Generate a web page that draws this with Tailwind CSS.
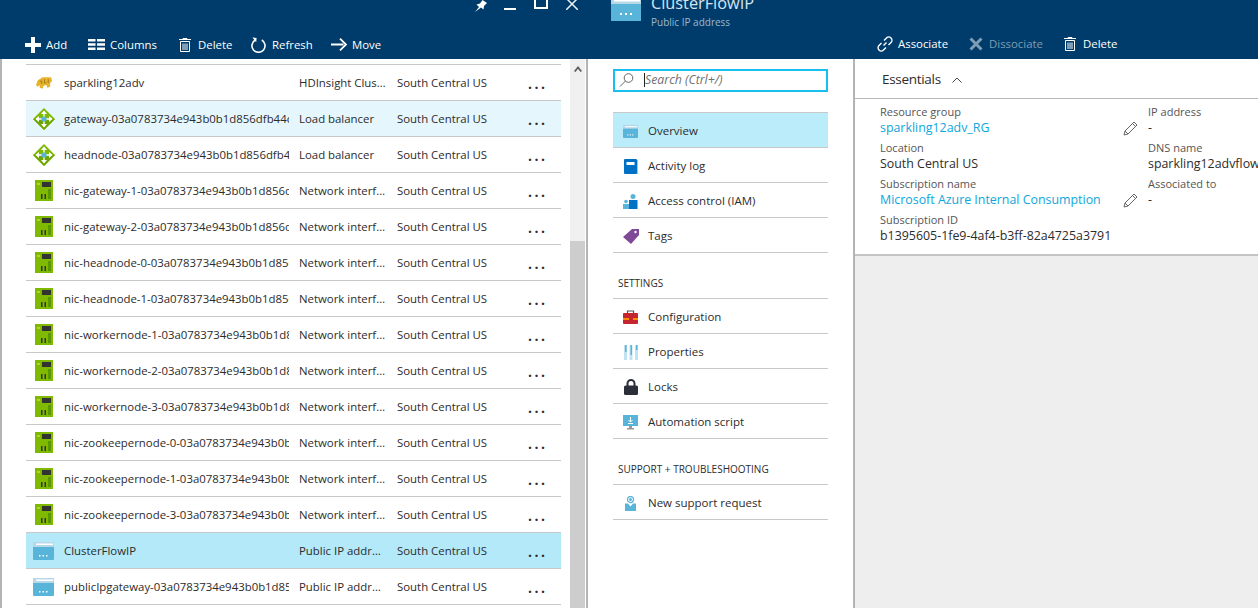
<!DOCTYPE html>
<html>
<head>
<meta charset="utf-8">
<script src="https://cdn.jsdelivr.net/npm/@tailwindcss/browser@4"></script>
</head>
<body class="m-0 h-[608px] w-[1258px] overflow-hidden bg-white font-['Open_Sans',sans-serif] text-[11.4px] text-[#2c2c2c]">
<svg class="hidden">
  <symbol id="lb" viewBox="0 0 22 22"><path d="M11 0 22 11 11 22 0 11Z" fill="#7fba00"/><path d="M11 11 22 11 11 22 0 11Z" fill="#6ea500"/><path d="M11 3v16M3 11h16" stroke="#fff" stroke-width="1.300"/><path d="M11 2.500 14 6H8ZM11 19.500 14 16H8ZM2.500 11 6 8v6ZM19.500 11 16 8v6Z" fill="#fff"/><circle cx="11" cy="11" r="2.600" fill="#59b4d9"/></symbol>
  <symbol id="nic" viewBox="0 0 18 21"><rect width="18" height="21" fill="#7fba00"/><rect x="7" y="2" width="9" height="5" fill="#333"/><rect x="2" y="3" width="3" height="2" fill="#b8d432"/><path d="M6 14h1.500v5H6ZM9.500 14H11v5H9.500Z" fill="#333"/><path d="M13 9h3v10h-3Z" fill="#5c9600"/></symbol>
  <symbol id="pip" viewBox="0 0 21 18"><rect width="21" height="18" rx="1" fill="#59b4d9"/><rect y="0" width="21" height="5" fill="#b8d8e8"/><rect x="3" y="1.500" width="17" height="1.500" fill="#fff"/><path d="M6 13h1.500v1.500H6ZM9.500 13H11v1.500H9.500ZM13 13h1.500v1.500H13Z" fill="#fff"/></symbol>
  <symbol id="del" viewBox="0 0 12 14"><path d="M0 1.500h12M4 1.500V.5h4v1M1.500 3.500h9V13.500h-9ZM4 5.500v6.500M6 5.500v6.500M8 5.500v6.500" fill="none" stroke="#fff" stroke-width="1"/></symbol>
  <symbol id="pen" viewBox="0 0 15 15"><path d="M1 14l1-4L11 1l3 3-9 9ZM2 10l3 3M9.500 2.500l3 3" fill="none" stroke="#666" stroke-width="1"/></symbol>
</svg>
<div class="flex h-[608px]">
  <!-- left blade -->
  <section class="flex h-full w-[588px] shrink-0 flex-col border-r-2 border-l-2 border-[#b4b4b4]">
    <header class="-mx-[2px] flex h-[59px] shrink-0 flex-col bg-[#003c6b] text-white">
      <div class="flex h-[36px] items-start justify-end pr-[10px]">
        <svg class="mr-[17px] h-[12px] w-[14px]" viewBox="0 0 14 12"><path d="M2 12 6 7 3.500 4.500 7 3.500 9.500 0 14 3 11 6 10.500 9.500 8 7.500Z" fill="#fff"/></svg>
        <div class="mt-[8px] mr-[18px] h-[2px] w-[12px] bg-white"></div>
        <div class="-mt-[2px] mr-[18px] h-[11px] w-[14px] border-2 border-white"></div>
        <svg class="-mt-[2px] h-[12px] w-[12px]" viewBox="0 0 12 12"><path d="M.5 0 6 5.500 11.500 0 12 .5 6.500 6 12 11.500 11.500 12 6 6.500.5 12 0 11.500 5.500 6 0 .5Z" fill="#fff" stroke="#fff" stroke-width=".9"/></svg>
      </div>
      <nav class="flex items-center pl-[25px] leading-[16px]">
        <svg class="mr-[5px] h-[16px] w-[16px]" viewBox="0 0 16 16"><path d="M6 0h4v6h6v4h-6v6H6v-6H0V6h6Z" fill="#fff"/></svg><span class="mr-[20px] w-[22px]">Add</span>
        <svg class="mr-[5px] h-[11px] w-[17px]" viewBox="0 0 17 11"><path d="M0 0h7.500v2.500H0ZM9 0h8v2.500H9ZM0 4.300h7.500v2.400H0ZM9 4.300h8v2.400H9ZM0 8.500h7.500V11H0ZM9 8.500h8V11H9Z" fill="#fff"/></svg><span class="mr-[21px] w-[48px]">Columns</span>
        <svg class="mr-[7px] h-[14px] w-[12px]"><use href="#del"/></svg><span class="mr-[20px] w-[33px]">Delete</span>
        <svg class="mr-[6px] h-[17px] w-[15px]" viewBox="0 0 16 17"><path d="M11.500 3.700A7 7 0 1 1 4.500 3.700" fill="none" stroke="#fff" stroke-width="1.700"/><path d="M1.500 1 6 1.500 5.500 6Z" fill="#fff"/></svg><span class="mr-[20px] w-[39px]">Refresh</span>
        <svg class="mr-[5px] h-[13px] w-[16px]" viewBox="0 0 16 13"><path d="M0 5.500h12.500v2H0Z" fill="#fff"/><path d="M9 .7 15 6.500 9 12.300" fill="none" stroke="#fff" stroke-width="1.800"/></svg><span>Move</span>
      </nav>
    </header>
    <div class="flex min-h-0 flex-1">
      <ul class="mt-[5px] ml-[24px] w-[535px] shrink-0 border-t border-[#c8c8c8]">
        <li class="flex h-[36px] items-center border-b border-[#c8c8c8]"><div class="mr-[3px] flex w-[35px] justify-center"><svg class="h-[14px] w-[18px]" viewBox="0 0 19 14"><path d="M1 9 3 4 8 1l9 0 1 4-2 2v4l-3 1-1-3-3 1-1 3-3-1V9L3 11Z" fill="#e8b32a"/><path d="M5 5h2v3M10 3v4h2M14 3v4" stroke="#9c7a1b" fill="none"/></svg></div><div class="w-[225px] overflow-hidden whitespace-nowrap">sparkling12adv</div><div class="mx-[10px] w-[88px] truncate">HDInsight Cluster</div><div class="w-[131px]">South Central US</div><div class="pt-[3px] text-[14px] leading-[14px] font-bold tracking-[2.5px]">...</div></li>
        <li class="flex h-[36px] items-center border-b border-[#c8c8c8] bg-[#e5f6fd]"><div class="mr-[3px] flex w-[35px] justify-center"><svg class="h-[22px] w-[22px]"><use href="#lb"/></svg></div><div class="w-[225px] overflow-hidden whitespace-nowrap">gateway-03a0783734e943b0b1d856dfb44c1a2b</div><div class="mx-[10px] w-[88px] truncate">Load balancer</div><div class="w-[131px]">South Central US</div><div class="pt-[3px] text-[14px] leading-[14px] font-bold tracking-[2.5px]">...</div></li>
        <li class="flex h-[36px] items-center border-b border-[#c8c8c8]"><div class="mr-[3px] flex w-[35px] justify-center"><svg class="h-[22px] w-[22px]"><use href="#lb"/></svg></div><div class="w-[225px] overflow-hidden whitespace-nowrap">headnode-03a0783734e943b0b1d856dfb44c1a2b</div><div class="mx-[10px] w-[88px] truncate">Load balancer</div><div class="w-[131px]">South Central US</div><div class="pt-[3px] text-[14px] leading-[14px] font-bold tracking-[2.5px]">...</div></li>
        <li class="flex h-[36px] items-center border-b border-[#c8c8c8]"><div class="mr-[3px] flex w-[35px] justify-center"><svg class="h-[21px] w-[18px]"><use href="#nic"/></svg></div><div class="w-[225px] overflow-hidden whitespace-nowrap">nic-gateway-1-03a0783734e943b0b1d856dfb44c</div><div class="mx-[10px] w-[88px] truncate">Network interfaces</div><div class="w-[131px]">South Central US</div><div class="pt-[3px] text-[14px] leading-[14px] font-bold tracking-[2.5px]">...</div></li>
        <li class="flex h-[36px] items-center border-b border-[#c8c8c8]"><div class="mr-[3px] flex w-[35px] justify-center"><svg class="h-[21px] w-[18px]"><use href="#nic"/></svg></div><div class="w-[225px] overflow-hidden whitespace-nowrap">nic-gateway-2-03a0783734e943b0b1d856dfb44c</div><div class="mx-[10px] w-[88px] truncate">Network interfaces</div><div class="w-[131px]">South Central US</div><div class="pt-[3px] text-[14px] leading-[14px] font-bold tracking-[2.5px]">...</div></li>
        <li class="flex h-[36px] items-center border-b border-[#c8c8c8]"><div class="mr-[3px] flex w-[35px] justify-center"><svg class="h-[21px] w-[18px]"><use href="#nic"/></svg></div><div class="w-[225px] overflow-hidden whitespace-nowrap">nic-headnode-0-03a0783734e943b0b1d856dfb44c</div><div class="mx-[10px] w-[88px] truncate">Network interfaces</div><div class="w-[131px]">South Central US</div><div class="pt-[3px] text-[14px] leading-[14px] font-bold tracking-[2.5px]">...</div></li>
        <li class="flex h-[36px] items-center border-b border-[#c8c8c8]"><div class="mr-[3px] flex w-[35px] justify-center"><svg class="h-[21px] w-[18px]"><use href="#nic"/></svg></div><div class="w-[225px] overflow-hidden whitespace-nowrap">nic-headnode-1-03a0783734e943b0b1d856dfb44c</div><div class="mx-[10px] w-[88px] truncate">Network interfaces</div><div class="w-[131px]">South Central US</div><div class="pt-[3px] text-[14px] leading-[14px] font-bold tracking-[2.5px]">...</div></li>
        <li class="flex h-[36px] items-center border-b border-[#c8c8c8]"><div class="mr-[3px] flex w-[35px] justify-center"><svg class="h-[21px] w-[18px]"><use href="#nic"/></svg></div><div class="w-[225px] overflow-hidden whitespace-nowrap">nic-workernode-1-03a0783734e943b0b1d856dfb44c</div><div class="mx-[10px] w-[88px] truncate">Network interfaces</div><div class="w-[131px]">South Central US</div><div class="pt-[3px] text-[14px] leading-[14px] font-bold tracking-[2.5px]">...</div></li>
        <li class="flex h-[36px] items-center border-b border-[#c8c8c8]"><div class="mr-[3px] flex w-[35px] justify-center"><svg class="h-[21px] w-[18px]"><use href="#nic"/></svg></div><div class="w-[225px] overflow-hidden whitespace-nowrap">nic-workernode-2-03a0783734e943b0b1d856dfb44c</div><div class="mx-[10px] w-[88px] truncate">Network interfaces</div><div class="w-[131px]">South Central US</div><div class="pt-[3px] text-[14px] leading-[14px] font-bold tracking-[2.5px]">...</div></li>
        <li class="flex h-[36px] items-center border-b border-[#c8c8c8]"><div class="mr-[3px] flex w-[35px] justify-center"><svg class="h-[21px] w-[18px]"><use href="#nic"/></svg></div><div class="w-[225px] overflow-hidden whitespace-nowrap">nic-workernode-3-03a0783734e943b0b1d856dfb44c</div><div class="mx-[10px] w-[88px] truncate">Network interfaces</div><div class="w-[131px]">South Central US</div><div class="pt-[3px] text-[14px] leading-[14px] font-bold tracking-[2.5px]">...</div></li>
        <li class="flex h-[36px] items-center border-b border-[#c8c8c8]"><div class="mr-[3px] flex w-[35px] justify-center"><svg class="h-[21px] w-[18px]"><use href="#nic"/></svg></div><div class="w-[225px] overflow-hidden whitespace-nowrap">nic-zookeepernode-0-03a0783734e943b0b1d856dfb44c</div><div class="mx-[10px] w-[88px] truncate">Network interfaces</div><div class="w-[131px]">South Central US</div><div class="pt-[3px] text-[14px] leading-[14px] font-bold tracking-[2.5px]">...</div></li>
        <li class="flex h-[36px] items-center border-b border-[#c8c8c8]"><div class="mr-[3px] flex w-[35px] justify-center"><svg class="h-[21px] w-[18px]"><use href="#nic"/></svg></div><div class="w-[225px] overflow-hidden whitespace-nowrap">nic-zookeepernode-1-03a0783734e943b0b1d856dfb44c</div><div class="mx-[10px] w-[88px] truncate">Network interfaces</div><div class="w-[131px]">South Central US</div><div class="pt-[3px] text-[14px] leading-[14px] font-bold tracking-[2.5px]">...</div></li>
        <li class="flex h-[36px] items-center border-b border-[#c8c8c8]"><div class="mr-[3px] flex w-[35px] justify-center"><svg class="h-[21px] w-[18px]"><use href="#nic"/></svg></div><div class="w-[225px] overflow-hidden whitespace-nowrap">nic-zookeepernode-3-03a0783734e943b0b1d856dfb44c</div><div class="mx-[10px] w-[88px] truncate">Network interfaces</div><div class="w-[131px]">South Central US</div><div class="pt-[3px] text-[14px] leading-[14px] font-bold tracking-[2.5px]">...</div></li>
        <li class="flex h-[36px] items-center border-b border-[#c8c8c8] bg-[#b3e9f9]"><div class="mr-[3px] flex w-[35px] justify-center"><svg class="h-[18px] w-[21px]"><use href="#pip"/></svg></div><div class="w-[225px] overflow-hidden whitespace-nowrap">ClusterFlowIP</div><div class="mx-[10px] w-[88px] truncate">Public IP address</div><div class="w-[131px]">South Central US</div><div class="pt-[3px] text-[14px] leading-[14px] font-bold tracking-[2.5px]">...</div></li>
        <li class="flex h-[36px] items-center border-b border-[#c8c8c8]"><div class="mr-[3px] flex w-[35px] justify-center"><svg class="h-[18px] w-[21px]"><use href="#pip"/></svg></div><div class="w-[225px] overflow-hidden whitespace-nowrap">publicIpgateway-03a0783734e943b0b1d856dfb44c</div><div class="mx-[10px] w-[88px] truncate">Public IP address</div><div class="w-[131px]">South Central US</div><div class="pt-[3px] text-[14px] leading-[14px] font-bold tracking-[2.5px]">...</div></li>
      </ul>
      <div class="ml-[9px] flex w-[15px] flex-col bg-[#f0f0f0]">
        <svg class="mx-auto mt-[7px] h-[6px] w-[8px]" viewBox="0 0 8 6"><path d="M.7 5.500 4 1.500 7.300 5.500" fill="none" stroke="#606060" stroke-width="1.800"/></svg>
        <div class="mt-[169px] flex-1 bg-[#cdcdcd]"></div>
      </div>
    </div>
  </section>
  <!-- right blade -->
  <section class="flex h-full min-w-0 flex-1 flex-col">
    <header class="flex h-[59px] shrink-0 flex-col bg-[#003c6b] text-white">
      <div class="flex h-[36px] items-start pl-[23px]">
        <svg class="-mt-[1px] h-[22px] w-[30px]" viewBox="0 0 30 22"><rect width="30" height="22" fill="#59b4d9"/><rect width="30" height="5" fill="#b8d8e8"/><rect x="3" y="0" width="26" height="2.500" fill="#fff"/><path d="M9 14h2v2H9ZM14 14h2v2h-2ZM19 14h2v2h-2Z" fill="#fff"/></svg>
        <div class="ml-[10px]">
          <div class="-mt-[7px] h-[20px] text-[16.300px] leading-[20px] text-[#d4e4ef]">ClusterFlowIP</div>
          <div class="mt-[3px] text-[10px] leading-[12px] text-[#9db8cd]">Public IP address</div>
        </div>
      </div>
      <nav class="flex items-center pl-[289px] leading-[16px]">
        <svg class="mr-[5px] h-[16px] w-[16px]" viewBox="0 0 16 16"><path d="M6.500 9.500 9.500 6.500M7 4.500l2.500-2.500a3 3 0 0 1 4.500 4.500L11.500 9M9 11.500 6.500 14A3 3 0 0 1 2 9.500L4.500 7" fill="none" stroke="#fff" stroke-width="1.400"/></svg><span class="mr-[21px] w-[50px]">Associate</span>
        <svg class="mr-[6px] h-[14px] w-[14px]" viewBox="0 0 14 14"><path d="M1.500 1.500l11 11M12.500 1.500l-11 11" stroke="#7f9db5" stroke-width="3"/></svg><span class="mr-[22px] w-[53px] text-[#7f9db5]">Dissociate</span>
        <svg class="mr-[7px] h-[14px] w-[12px]"><use href="#del"/></svg><span>Delete</span>
      </nav>
    </header>
    <div class="flex min-h-0 flex-1">
      <aside class="flex w-[267px] shrink-0 flex-col border-r-2 border-[#b4b4b4] pr-[25px] pl-[25px] text-[11.500px]">
        <div class="mt-[10px] flex h-[23px] items-center border-2 border-[#19c0ee] pb-[1px] pl-[4px]">
          <svg class="h-[14px] w-[15px]" viewBox="0 0 15 14"><circle cx="9.500" cy="5" r="4.300" fill="none" stroke="#666"/><path d="M6.500 8 1 13.500" stroke="#666"/></svg>
          <div class="ml-[10px] h-[14px] border-l border-[#222] text-[12.300px] leading-[14px] text-[#707070] italic">Search (Ctrl+/)</div>
        </div>
        <ul class="mt-[20px] border-t border-[#c8c8c8]">
          <li class="flex h-[35px] items-center border-b border-[#c8c8c8] bg-[#bbecf9] pt-[2px]"><div class="flex w-[35px] justify-center"><svg class="h-[13px] w-[15px]"><use href="#pip"/></svg></div>Overview</li>
          <li class="flex h-[35px] items-center border-b border-[#c8c8c8] pt-[2px]"><div class="flex w-[35px] justify-center"><svg class="h-[15px] w-[14px]" viewBox="0 0 14 15"><rect width="13" height="15" rx="1" fill="#0072c6"/><rect x="2.500" y="3" width="8" height="3" fill="#fff"/><rect x="13" y="1" width="1" height="14" fill="#a0c4e4"/></svg></div>Activity log</li>
          <li class="flex h-[35px] items-center border-b border-[#c8c8c8] pt-[2px]"><div class="flex w-[35px] justify-center"><svg class="h-[15px] w-[15px]" viewBox="0 0 15 15"><circle cx="10" cy="2.500" r="2.500" fill="#59b4d9"/><path d="M6 6h8.500v9H6Z" fill="#0072c6"/><circle cx="3" cy="7.500" r="1.800" fill="#59b4d9"/><path d="M0 10h6v5H0Z" fill="#59b4d9"/></svg></div>Access control (IAM)</li>
          <li class="flex h-[35px] items-center border-b border-[#c8c8c8] pt-[2px]"><div class="flex w-[35px] justify-center"><svg class="h-[15px] w-[16px]" viewBox="0 0 16 15"><path d="M0 8 9 0h7v6l-8 9Z" fill="#804998"/><circle cx="12.500" cy="3" r="1.200" fill="#fff"/></svg></div>Tags</li>
        </ul>
        <h3 class="mt-[24px] mb-[8px] pl-[5px] text-[10px] leading-[13px] font-normal">SETTINGS</h3>
        <ul class="border-t border-[#c8c8c8]">
          <li class="flex h-[35px] items-center border-b border-[#c8c8c8] pt-[2px]"><div class="flex w-[35px] justify-center"><svg class="h-[14px] w-[15px]" viewBox="0 0 15 14"><path d="M4.500 3V1h6v2" fill="none" stroke="#555" stroke-width="1.200"/><rect y="3" width="15" height="11" rx="1" fill="#c4262e"/><path d="M0 8h6v2H0ZM10 8h5v2h-5Z" fill="#ff8c00"/></svg></div>Configuration</li>
          <li class="flex h-[35px] items-center border-b border-[#c8c8c8] pt-[2px]"><div class="flex w-[35px] justify-center"><svg class="h-[15px] w-[14px]" viewBox="0 0 14 15"><path d="M0 0h3v15H0ZM5.500 0h3v15h-3ZM11 0h3v15h-3Z" fill="#bfe3f2"/><path d="M1 0h1.500v7H1ZM6.500 0H8v10H6.500ZM12 0h1.500v5H12Z" fill="#59b4d9"/></svg></div>Properties</li>
          <li class="flex h-[35px] items-center border-b border-[#c8c8c8] pt-[2px]"><div class="flex w-[35px] justify-center"><svg class="h-[16px] w-[14px]" viewBox="0 0 14 16"><path d="M3.500 7V4.500a3.500 3.500 0 0 1 7 0V7" fill="none" stroke="#2b2f3a" stroke-width="2"/><rect y="6.500" width="14" height="9.500" rx="1.500" fill="#2b2f3a"/></svg></div>Locks</li>
          <li class="flex h-[35px] items-center border-b border-[#c8c8c8] pt-[2px]"><div class="flex w-[35px] justify-center"><svg class="h-[15px] w-[15px]" viewBox="0 0 15 15"><rect width="15" height="11" fill="#59b4d9"/><path d="M7.500 2v5M5.500 5l2 2 2-2M5 8.500h5" fill="none" stroke="#fff"/><path d="M6 11h3v2H6ZM4 13h7v1.500H4Z" fill="#999"/></svg></div>Automation script</li>
        </ul>
        <h3 class="mt-[24px] mb-[8px] pl-[5px] text-[10px] leading-[13px] font-normal">SUPPORT + TROUBLESHOOTING</h3>
        <ul class="border-t border-[#c8c8c8]">
          <li class="flex h-[35px] items-center border-b border-[#c8c8c8] pt-[2px]"><div class="flex w-[35px] justify-center"><svg class="h-[15px] w-[11px]" viewBox="0 0 11 15"><circle cx="5.500" cy="3.500" r="3" fill="none" stroke="#59b4d9" stroke-width="1.300"/><circle cx="5.500" cy="3.500" r="1.500" fill="#59b4d9"/><path d="M0 7.500l3 0 2.500 3 2.500-3 3 0V15H0Z" fill="#59b4d9"/></svg></div>New support request</li>
        </ul>
      </aside>
      <main class="flex min-w-0 flex-1 flex-col bg-[#eeeeee]">
        <div class="bg-white">
          <div class="flex h-[40px] items-center border-b border-[#b8b8b8] pt-[2px] pl-[27px] text-[13.500px] tracking-[-0.3px]">
            Essentials
            <svg class="ml-[11px] h-[6px] w-[10px]" viewBox="0 0 10 6"><path d="M.5 5.500 5 1l4.500 4.500" fill="none" stroke="#444"/></svg>
          </div>
          <div class="relative flex h-[157px] border-b-2 border-[#c4c4c4] pl-[25px] text-[12.400px] leading-[16px]">
            <dl class="mt-[5px] w-[268px] shrink-0">
              <dt class="h-[16px] text-[11px] text-[#555]">Resource group</dt>
              <dd class="flex h-[20px] justify-between pr-[10px]"><span class="text-[#0da7dc]">sparkling12adv_RG</span><svg class="mt-[1px] h-[15px] w-[15px]"><use href="#pen"/></svg></dd>
              <dt class="h-[16px] text-[11px] text-[#555]">Location</dt>
              <dd class="h-[20px]">South Central US</dd>
              <dt class="h-[16px] text-[11px] text-[#555]">Subscription name</dt>
              <dd class="flex h-[20px] justify-between pr-[10px]"><span class="text-[#0da7dc]">Microsoft Azure Internal Consumption</span><svg class="mt-[1px] h-[15px] w-[15px]"><use href="#pen"/></svg></dd>
              <dt class="h-[16px] text-[11px] text-[#555]">Subscription ID</dt>
              <dd class="h-[20px] whitespace-nowrap">b1395605-1fe9-4af4-b3ff-82a4725a3791</dd>
            </dl>
            <dl class="mt-[5px] min-w-0 flex-1 overflow-hidden whitespace-nowrap">
              <dt class="h-[16px] text-[11px] text-[#555]">IP address</dt>
              <dd class="h-[20px]">-</dd>
              <dt class="h-[16px] text-[11px] text-[#555]">DNS name</dt>
              <dd class="h-[20px]">sparkling12advflow.southcentralus</dd>
              <dt class="h-[16px] text-[11px] text-[#555]">Associated to</dt>
              <dd class="h-[20px]">-</dd>
            </dl>
          </div>
        </div>
      </main>
    </div>
  </section>
</div>
</body>
</html>
